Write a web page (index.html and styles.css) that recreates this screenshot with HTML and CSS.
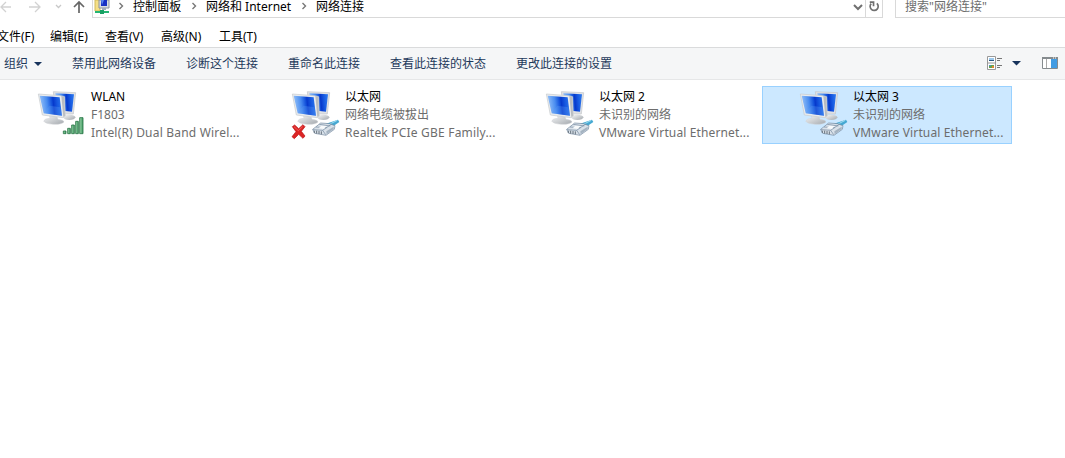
FILE: index.html
```html
<!DOCTYPE html>
<html lang="zh-CN">
<head>
<meta charset="utf-8">
<title>网络连接</title>
<link rel="stylesheet" href="styles.css">
</head>
<body>
<svg class="defs" aria-hidden="true">
  <defs>
    <linearGradient id="screen" x1="0" y1="0.1" x2="1" y2="0">
      <stop offset="0" stop-color="#8fbdf8"/><stop offset=".3" stop-color="#4a8df0"/><stop offset=".5" stop-color="#1554dc"/><stop offset=".58" stop-color="#0639cc"/><stop offset=".75" stop-color="#1658e0"/><stop offset="1" stop-color="#2f7cf0"/>
    </linearGradient>
    <linearGradient id="stand" x1="0" y1="0" x2="1" y2="1">
      <stop offset="0" stop-color="#f7f8f9"/><stop offset="1" stop-color="#a3a8ad"/>
    </linearGradient>
    <linearGradient id="bar" x1="0" y1="0" x2="1" y2="0">
      <stop offset="0" stop-color="#9ad4a8"/><stop offset="1" stop-color="#3f9a62"/>
    </linearGradient>
    <symbol id="monitors" viewBox="0 0 210 180">
      <ellipse cx="118" cy="100" rx="18" ry="8" fill="url(#stand)"/>
      <path d="M70 23L137 26L130 90L106 90L76 84Z" fill="#dfe1e4" stroke="#c2c6ca" stroke-width="2"/>
      <path d="M76 28L132 31L126 83L82 78Z" fill="url(#screen)"/>
      <path d="M58 93L80 95L84 106Q102 108 102 114Q94 122 70 121Q45 119 41 111Q43 104 60 103Z" fill="url(#stand)" stroke="#d0d3d6" stroke-width="1.5"/>
      <path d="M25 30L92 35L104 38L106 96L99 101L37 93Z" fill="#e9ebed" stroke="#c6cacd" stroke-width="2"/>
      <path d="M94 36L103 39L105 95L100 99Z" fill="#b8bcc1"/>
      <path d="M29 35L89 40L96 95L41 88Z" fill="url(#screen)"/>
      <path d="M41 88L58 65L92 70L96 95Z" fill="#5fa0f5" opacity=".3"/>
    </symbol>
    <symbol id="cable" viewBox="0 0 210 180">
      <path d="M126 119L162 107L166 114L144 129Z" fill="#45a8d2"/>
      <path d="M138 120L160 109" stroke="#a0ddf1" stroke-width="3"/>
      <path d="M86 136L110 117L136 119L153 125L151 136L126 154L92 148Z" fill="#d9e1e9" stroke="#71879d" stroke-width="2"/>
      <path d="M86 137L116 139L125 152M116 139L143 120M96 129L128 131M106 121L139 126" fill="none" stroke="#71879d" stroke-width="2"/>
      <path d="M91 140V147M98 140V149M105 141V150M112 142V151" stroke="#65717c" stroke-width="3"/>
      <path d="M112 125L128 126L119 135L104 133Z" fill="#f8fafb"/>
      <path d="M127 142L149 128V135L128 151Z" fill="#a4b3c1"/>
    </symbol>
    <symbol id="signal" viewBox="0 0 210 180">
      <g fill="url(#bar)" stroke="#287345" stroke-width="2.500">
        <path d="M100 141h8v8h-8z"/><path d="M113 133h8v16h-8z"/><path d="M125 123h8v26h-8z"/><path d="M137 112h8v37h-8z"/><path d="M149 101h10v48h-10z"/>
      </g>
    </symbol>
    <symbol id="cross" viewBox="0 0 210 180">
      <path d="M25 128L32 123L44 134L57 122L63 128L52 142L63 156L57 163L44 151L31 164L24 158L36 143Z" fill="#dc2424" stroke="#b80d14" stroke-width="2"/>
      <path d="M30 128L43 140L56 128" fill="none" stroke="#f77c72" stroke-width="2"/>
    </symbol>
  </defs>
</svg>

<header class="address-row">
  <svg class="nav" viewBox="0 0 92 18" fill="none">
    <path d="M1 7H11M6 2L1 7L6 12" stroke="#d2d2d2" stroke-width="1.3"/>
    <path d="M29 7H40M35 2L40 7L35 12" stroke="#d2d2d2" stroke-width="1.3"/>
    <path d="M56 5L58.500 7.500L61 5" stroke="#c8c8c8" stroke-width="1.3"/>
    <path d="M79 13V2M74 7L79 2L84 7" stroke="#666" stroke-width="1.7"/>
  </svg>
  <div class="address">
    <svg class="place" viewBox="0 0 18 17">
      <path d="M2 0H7V11H2Z" fill="#f4df87" stroke="#d1b956"/>
      <path d="M6 0H16V8H6Z" fill="#d9dde2" stroke="#8b929c"/>
      <path d="M8 0H14V6H8Z" fill="#1830c4"/><path d="M8 0L11 0L9 5Z" fill="#5a86ef"/>
      <path d="M9 8H13V10H9Z" fill="#a2aabb"/>
      <path d="M2 12H16" stroke="#24b573" stroke-width="2"/><path d="M7 10H11V14H7Z" fill="#18a064"/>
    </svg>
    <svg class="sep" viewBox="0 0 6 8"><path d="M1.500 1L4.500 4L1.500 7"/></svg>
    <span class="c1">控制面板</span>
    <svg class="sep" viewBox="0 0 6 8"><path d="M1.500 1L4.500 4L1.500 7"/></svg>
    <span class="c2">网络和 Internet</span>
    <svg class="sep" viewBox="0 0 6 8"><path d="M1.500 1L4.500 4L1.500 7"/></svg>
    <span class="c3">网络连接</span>
    <svg class="drop" viewBox="0 0 10 8"><path d="M1 2L5 6L9 2"/></svg>
    <svg class="refresh" viewBox="0 0 17 17"><path d="M11.500 3A4.300 4.300 0 1 1 5.500 3.300" fill="none" stroke="#707070" stroke-width="1.800"/><path d="M4 1.800H8V6" fill="none" stroke="#707070" stroke-width="1.800"/></svg>
  </div>
  <div class="search">搜索"网络连接"</div>
</header>

<nav class="menu"><span class="m1">文件(F)</span><span class="m2">编辑(E)</span><span class="m3">查看(V)</span><span class="m4">高级(N)</span><span>工具(T)</span></nav>

<div class="toolbar">
  <span class="organize">组织<i class="caret"></i></span>
  <span>禁用此网络设备</span><span>诊断这个连接</span><span>重命名此连接</span><span>查看此连接的状态</span><span>更改此连接的设置</span>
  <svg class="views" viewBox="0 0 80 18">
    <path d="M2.500 1.500H10.500V14.500H2.500ZM2.500 8H10.500" fill="#fff" stroke="#999"/>
    <path d="M4 3H9V6H4Z" fill="#9cc8ec"/><path d="M4 5H9V6H4Z" fill="#285783"/>
    <path d="M4 10H9V13H4Z" fill="#65a34b"/><path d="M4 10H6V11H4Z" fill="#4b8fcc"/><path d="M7 11H9V13H7Z" fill="#e38532"/>
    <path d="M12 3.500H17M12 5.500H15M12 10.500H17M12 12.500H15" stroke="#777"/>
    <path d="M27 6H36L31.500 10.500Z" fill="#17335c"/>
    <path d="M57.500 2.500H72.500V13.500H57.500Z" fill="#fff" stroke="#858b8e"/>
    <path d="M57 2H73V4H57Z" fill="#858b8e"/><path d="M61.500 4V13" stroke="#aaa"/>
    <path d="M66 4H72V13H66Z" fill="#429ce3"/><path d="M68 3H69M70 3H71" stroke="#fff"/>
  </svg>
</div>

<main class="connections">
  <article class="tile">
    <svg class="icon" viewBox="0 0 210 180"><use href="#monitors"/><use href="#signal"/></svg>
    <div><h2>WLAN</h2><p>F1803</p><p class="device d1">Intel(R) Dual Band Wirel...</p></div>
  </article>
  <article class="tile">
    <svg class="icon" viewBox="0 0 210 180"><use href="#monitors"/><use href="#cable"/><use href="#cross"/></svg>
    <div><h2>以太网</h2><p>网络电缆被拔出</p><p class="device d2">Realtek PCIe GBE Family...</p></div>
  </article>
  <article class="tile">
    <svg class="icon" viewBox="0 0 210 180"><use href="#monitors"/><use href="#cable"/></svg>
    <div><h2>以太网 2</h2><p>未识别的网络</p><p class="device d3">VMware Virtual Ethernet...</p></div>
  </article>
  <article class="tile selected">
    <svg class="icon" viewBox="0 0 210 180"><use href="#monitors"/><use href="#cable"/></svg>
    <div><h2>以太网 3</h2><p>未识别的网络</p><p class="device d3">VMware Virtual Ethernet...</p></div>
  </article>
</main>
</body>
</html>
```
FILE: styles.css
```css
* { box-sizing: border-box; }
body {
  margin: 0;
  height: 458px;
  overflow: hidden;
  background: #fff;
  color: #000;
  font: 12px/18px "Noto Sans", "Noto Sans CJK SC", sans-serif;
  white-space: nowrap;
}
.defs { display: block; width: 0; height: 0; }
.address-row { display: flex; height: 18px; }
.nav { width: 92px; height: 18px; flex: none; }
.address {
  display: flex;
  width: 791px;
  height: 18px;
  border: 1px solid #d9d9d9;
  border-top: 0;
  line-height: 13px;
}
.place { width: 18px; height: 17px; margin-right: 7px; }
.sep { width: 6px; height: 8px; margin-top: 2px; margin-right: 9px; fill: none; stroke: #777; stroke-width: 1.4; }
.address .c1 { width: 48px; margin-right: 10px; letter-spacing: .1px; }
.address .c2 { width: 86px; margin-right: 9px; }
.drop { width: 10px; height: 8px; margin: 3px 2px 0 auto; fill: none; stroke: #707070; stroke-width: 2; }
.refresh { width: 17px; height: 17px; border-left: 1px solid #d9d9d9; }
.search {
  flex: 1;
  margin-left: 12px;
  padding-left: 9px;
  border: solid #d9d9d9;
  border-width: 0 0 1px 1px;
  color: #6d6d6d;
  line-height: 13px;
}
.menu { display: flex; height: 29px; padding-top: 10px; margin-left: -3px; }
.m1 { width: 53px; }
.m2 { width: 55px; }
.m3 { width: 56px; }
.m4 { width: 58px; }
.toolbar {
  display: flex;
  align-items: center;
  gap: 30px;
  height: 33px;
  padding-left: 4px;
  border-top: 1px solid #dadbdc;
  border-bottom: 1px solid #e6e7e8;
  background: #f5f6f7;
  color: #1e395b;
}
.organize { display: flex; align-items: center; gap: 6px; }
.caret { border: 4px solid transparent; border-top-color: #17335c; border-bottom: 0; }
.views { width: 80px; height: 18px; margin-left: auto; }
.connections { display: flex; gap: 4px; padding: 6px 0 0; }
.tile { display: flex; flex: none; width: 250px; height: 58px; padding-top: 1px; border: 1px solid transparent; }
.tile.selected { background: #cce8ff; border-color: #99d1ff; }
.icon { flex: none; width: 70px; height: 60px; margin: -4px -9px 0 29px; }
h2, p { margin: 0; font: inherit; }
p { color: #6d6d6d; }
.d1 { letter-spacing: .19px; }
.d2 { letter-spacing: .2px; }
.d3 { letter-spacing: .13px; }
```
